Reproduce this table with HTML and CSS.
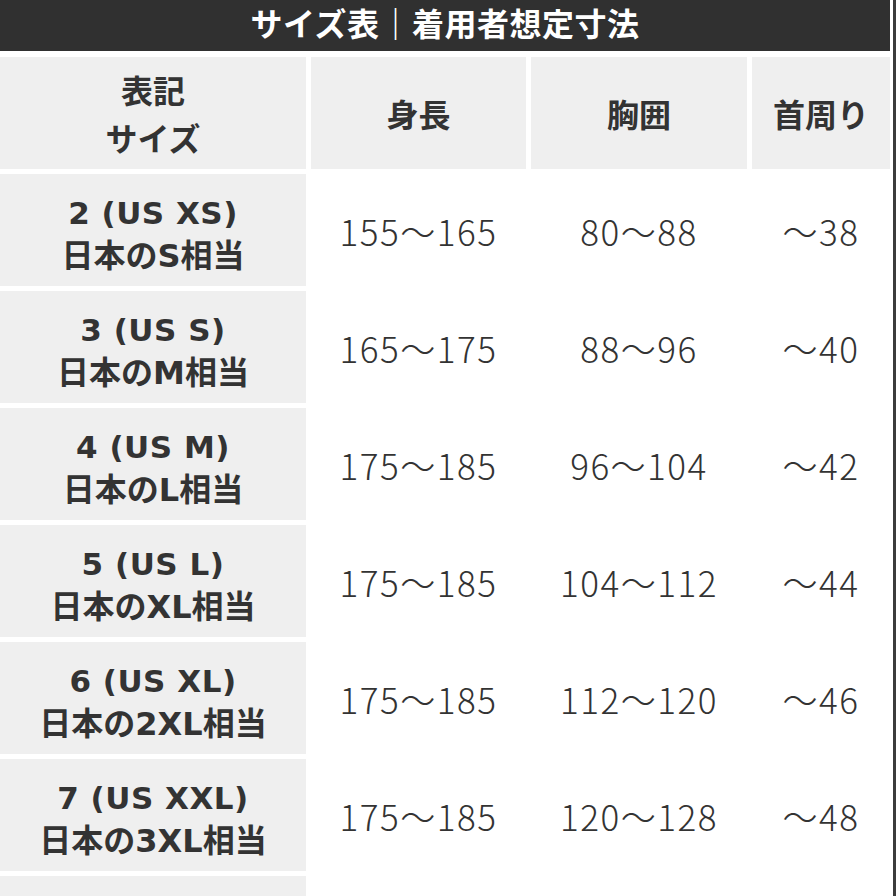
FILE: index.html
```html
<!DOCTYPE html>
<html lang="ja">
<head>
<meta charset="utf-8">
<link rel="stylesheet" href="styles.css">
</head>
<body>
<div class="page">
  <div class="title">サイズ表｜着用者想定寸法</div>
  <div class="table">
    <div class="cell head"><span>表記<br>サイズ</span></div>
    <div class="cell head"><span>身長</span></div>
    <div class="cell head"><span>胸囲</span></div>
    <div class="cell head"><span>首周り</span></div>

    <div class="cell size"><div class="lines"><span class="l1">2 (US XS)</span><span class="l2">日本のS相当</span></div></div>
    <div class="cell num">155〜165</div>
    <div class="cell num">80〜88</div>
    <div class="cell num">〜38</div>

    <div class="cell size"><div class="lines"><span class="l1">3 (US S)</span><span class="l2">日本のM相当</span></div></div>
    <div class="cell num">165〜175</div>
    <div class="cell num">88〜96</div>
    <div class="cell num">〜40</div>

    <div class="cell size"><div class="lines"><span class="l1">4 (US M)</span><span class="l2">日本のL相当</span></div></div>
    <div class="cell num">175〜185</div>
    <div class="cell num">96〜104</div>
    <div class="cell num">〜42</div>

    <div class="cell size"><div class="lines"><span class="l1">5 (US L)</span><span class="l2">日本のXL相当</span></div></div>
    <div class="cell num">175〜185</div>
    <div class="cell num">104〜112</div>
    <div class="cell num">〜44</div>

    <div class="cell size"><div class="lines"><span class="l1">6 (US XL)</span><span class="l2">日本の2XL相当</span></div></div>
    <div class="cell num">175〜185</div>
    <div class="cell num">112〜120</div>
    <div class="cell num">〜46</div>

    <div class="cell size"><div class="lines"><span class="l1">7 (US XXL)</span><span class="l2">日本の3XL相当</span></div></div>
    <div class="cell num">175〜185</div>
    <div class="cell num">120〜128</div>
    <div class="cell num">〜48</div>

    <div class="cell size"><div class="lines"><span class="l1">8 (US 3XL)</span><span class="l2">日本の4XL相当</span></div></div>
    <div class="cell num">175〜185</div>
    <div class="cell num">128〜136</div>
    <div class="cell num">〜50</div>
  </div>
</div>
</body>
</html>
```

FILE: styles.css
```css
html, body {
  margin: 0;
  padding: 0;
  background: #ffffff;
}
body {
  width: 896px;
  height: 896px;
  overflow: hidden;
}
.page {
  width: 890px;
  border-right: 3px solid #ffffff;
  box-shadow: 3px 0 0 #3c3c3c;
  min-height: 896px;
  font-family: "Noto Sans CJK JP", sans-serif;
  color: #333333;
}
.title {
  height: 51px;
  background: #303030;
  color: #ffffff;
  font-weight: 700;
  font-size: 32px;
  line-height: 45px;
  text-align: center;
  letter-spacing: 0.5px;
  margin-bottom: 6px;
}
.table {
  display: grid;
  grid-template-columns: 306px 215px 216px 138px;
  grid-auto-rows: 112px;
  gap: 5px;
}
.cell {
  display: flex;
  align-items: center;
  justify-content: center;
  text-align: center;
}
.head, .size {
  background: #efefef;
  font-weight: 700;
  font-size: 32px;
  color: #333333;
}
.head span {
  line-height: 48px;
}
.lines {
  display: flex;
  flex-direction: column;
  align-items: center;
  padding-top: 8px;
  font-family: "DejaVu Sans", "Noto Sans CJK JP", sans-serif;
}
.l1 {
  font-size: 31px;
  line-height: 44px;
  letter-spacing: 0.5px;
}
.l2 {
  font-size: 32px;
  line-height: 43px;
}
.num {
  background: #ffffff;
  font-size: 35px;
  font-weight: 300;
  letter-spacing: 1.5px;
  color: #333333;
}
```
